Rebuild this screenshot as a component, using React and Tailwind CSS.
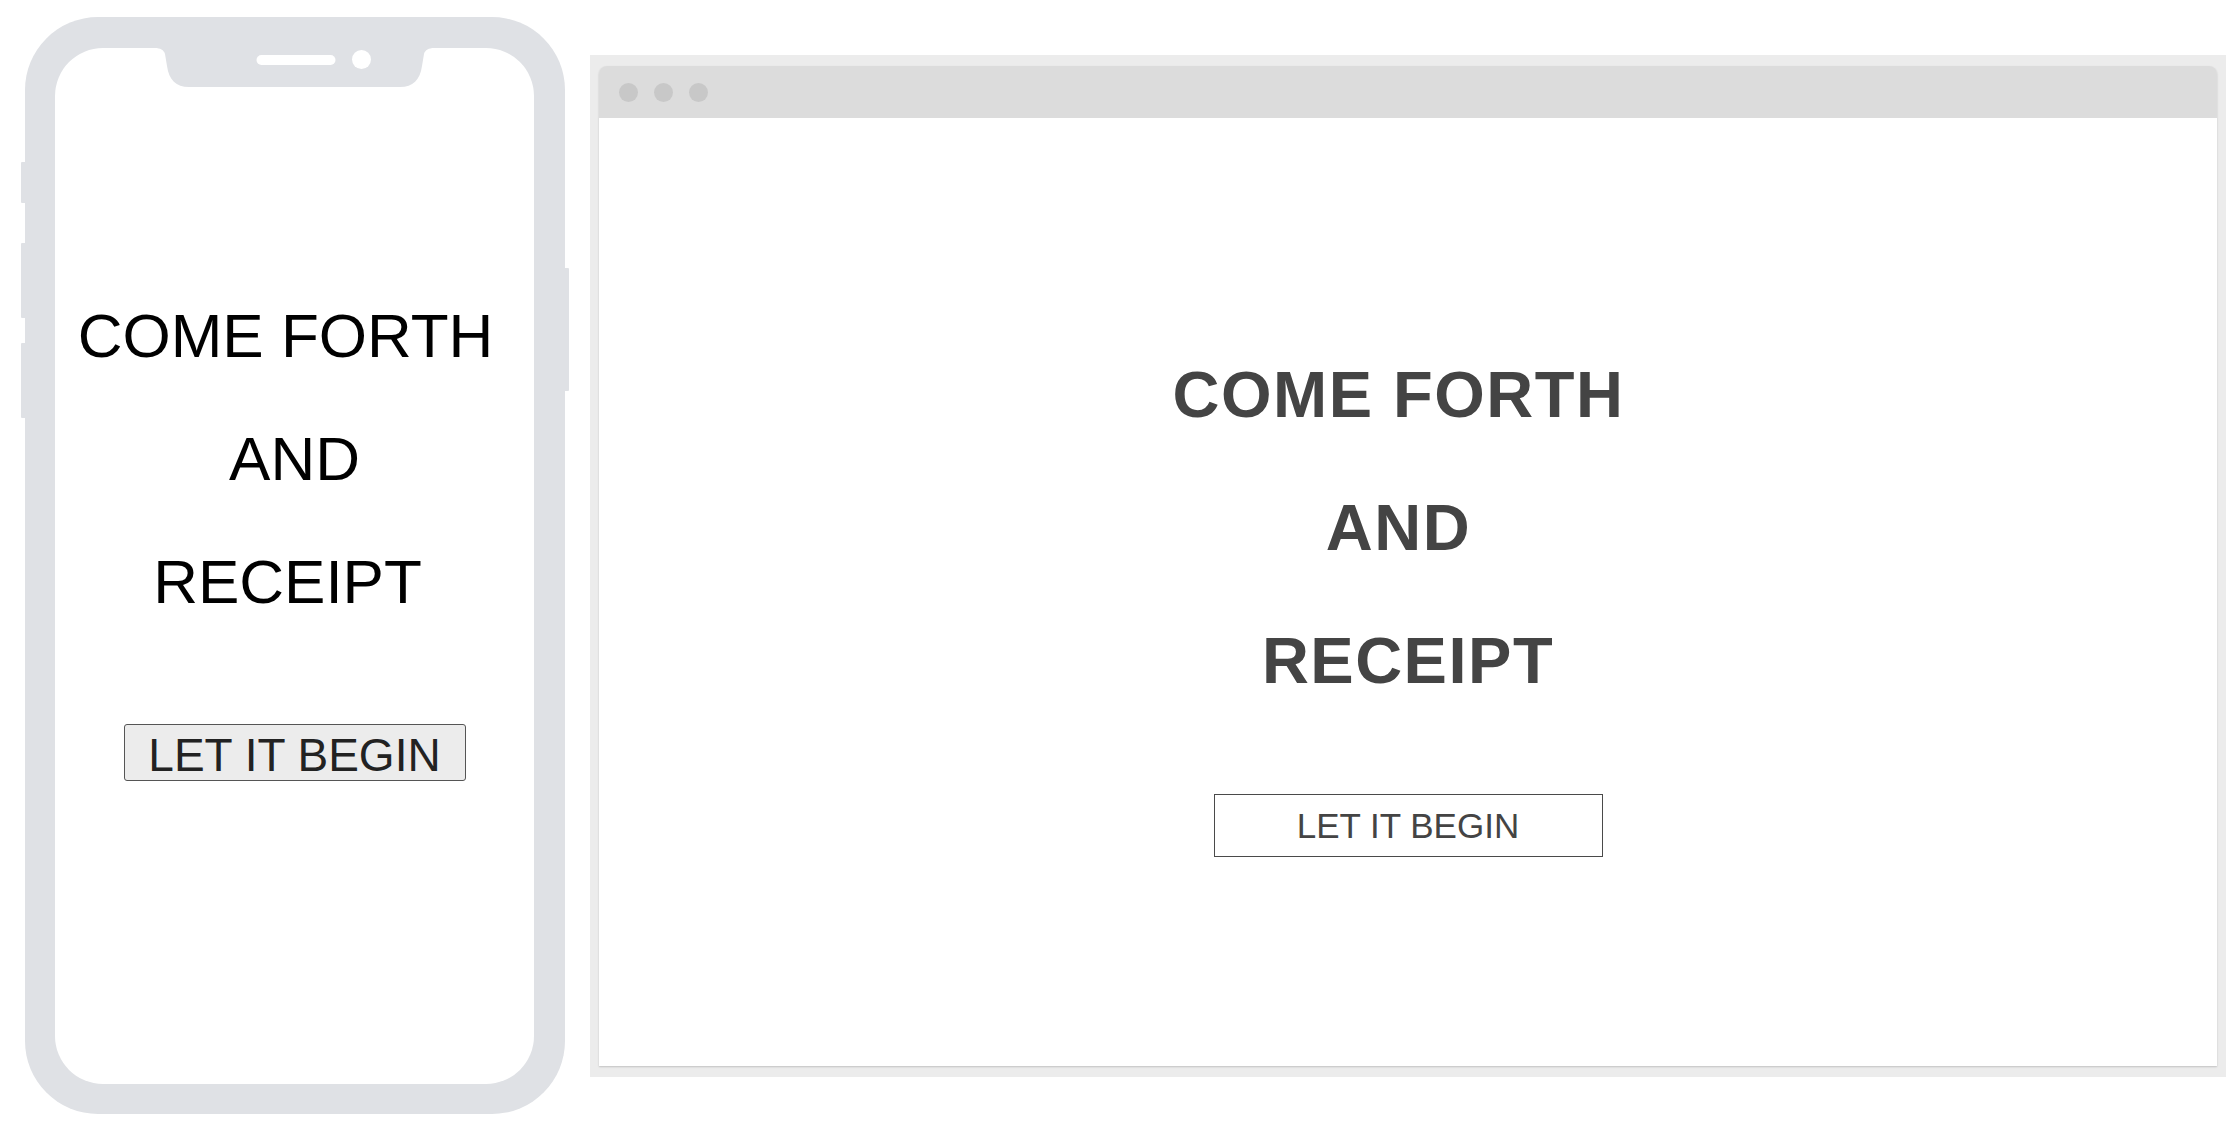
import React from 'react'

// Notch drawn as one shape, speaker + camera punched out in white
const Notch = () => (
  <svg width="279" height="39" viewBox="0 0 279 39" className="mx-auto block shrink-0">
    <path
      d="M0,0 H279 C274,0 270,2 269,6 L267,18 C265,32 258,39 245,39 H34 C21,39 14,32 12,18 L10,6 C9,2 5,0 0,0 Z"
      fill="#dfe1e5"
    />
    <rect x="101.5" y="7" width="79" height="10" rx="5" fill="#fff" />
    <circle cx="206.5" cy="11.5" r="9.5" fill="#fff" />
  </svg>
)

function Phone() {
  return (
    <div className="flex items-start ml-[21px] mt-[17px] shrink-0">
      {/* left side buttons */}
      <div className="flex flex-col w-[4px] shrink-0">
        <div className="mt-[145px] h-[41px] bg-[#dfe1e5] rounded-l-[1px]" />
        <div className="mt-[40px] h-[75px] bg-[#dfe1e5] rounded-l-[1px]" />
        <div className="mt-[25px] h-[75px] bg-[#dfe1e5] rounded-l-[1px]" />
      </div>

      {/* body */}
      <div className="w-[540px] h-[1097px] shrink-0 rounded-[73px] bg-[#dfe1e5] pt-[31px] pl-[30px] pr-[31px] pb-[30px]">
        <div className="w-[479px] h-[1036px] rounded-[48px] bg-white flex flex-col font-['Liberation_Sans',Arial,sans-serif] text-black">
          <Notch />
          <div className="mt-[187px] flex flex-col items-center text-[62px] leading-[123px]">
            <div className="pr-[18px] whitespace-nowrap">COME FORTH</div>
            <div>AND</div>
            <div className="pr-[14px]">RECEIPT</div>
          </div>
          <button className="mt-[81px] mx-auto w-[342px] h-[57px] pt-[4px] flex items-center justify-center bg-[#ececec] border border-[#555] rounded-[3px] text-[#222] text-[46px] leading-none whitespace-nowrap">
            LET IT BEGIN
          </button>
        </div>
      </div>

      {/* right side button */}
      <div className="w-[4px] shrink-0 mt-[251px] h-[123px] bg-[#dfe1e5] rounded-r-[1px]" />
    </div>
  )
}

function BrowserWindow() {
  return (
    <div className="ml-[21px] mt-[55px] w-[1636px] h-[1022px] shrink-0 bg-[#ececec] pt-[11px] pb-[11px] pl-[9px] pr-[9px]">
      <div className="w-[1618px] h-[1000px] flex flex-col rounded-t-[8px] shadow-[0_1px_2px_rgba(0,0,0,0.18)]">
        <div className="h-[52px] bg-[#dcdcdc] rounded-t-[8px] flex items-center pl-[20px] gap-[16px] shrink-0">
          <div className="w-[19px] h-[19px] rounded-full bg-[#c8c8c8]" />
          <div className="w-[19px] h-[19px] rounded-full bg-[#c8c8c8]" />
          <div className="w-[19px] h-[19px] rounded-full bg-[#c8c8c8]" />
        </div>
        <div className="flex-1 bg-white flex flex-col items-center font-['Liberation_Sans',Arial,sans-serif] text-[#444]">
          <div className="mt-[210px] flex flex-col items-center text-[65px] font-bold tracking-[1.5px] leading-[133px]">
            <div className="pr-[19px] whitespace-nowrap">COME FORTH</div>
            <div className="pr-[19px]">AND</div>
            <div>RECEIPT</div>
          </div>
          <button className="mt-[67px] w-[389px] h-[63px] flex items-center justify-center bg-white border border-[#4a4a4a] text-[35px] leading-none text-[#444] whitespace-nowrap">
            LET IT BEGIN
          </button>
        </div>
      </div>
    </div>
  )
}

export default function App() {
  return (
    <div className="w-[2226px] h-[1132px] bg-white flex items-start overflow-hidden">
      <Phone />
      <BrowserWindow />
    </div>
  )
}
